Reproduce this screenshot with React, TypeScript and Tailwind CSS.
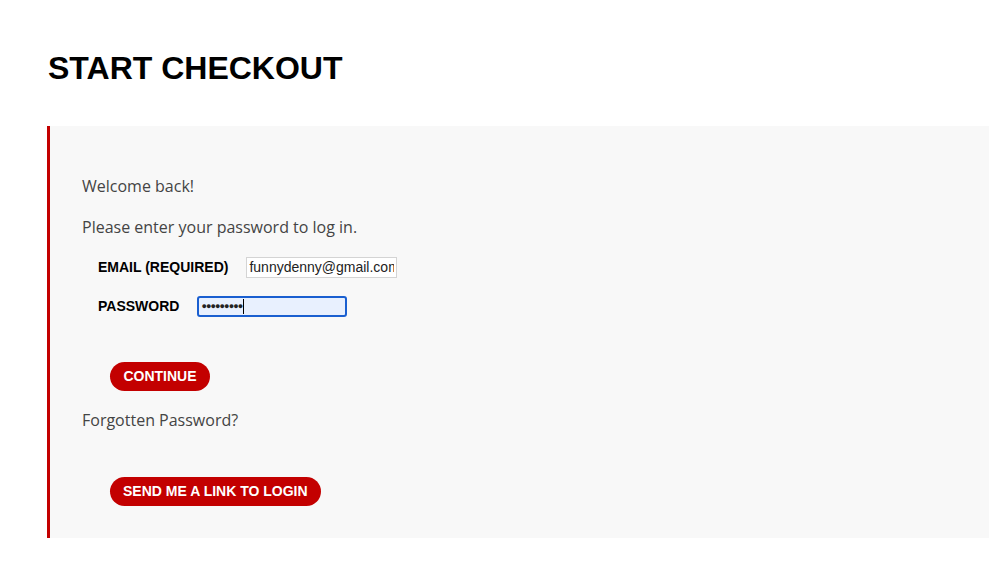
import React from 'react';

const sans = { fontFamily: '"Open Sans", sans-serif' };

const App: React.FC = () => {
  return (
    <div className="min-h-[579px] bg-white pl-[47px] pt-[50px]" style={{ fontFamily: '"Liberation Sans", Arial, sans-serif' }}>
      {/* Title */}
      <h1 className="text-[32px] leading-[36px] font-bold text-black ml-px">START CHECKOUT</h1>

      {/* Login panel */}
      <div className="mt-[40px] border-l-[3px] border-[#c30000] bg-[#f8f8f8] pl-[32px] pt-[48px] pb-[32px]">
        <p className="text-[16px] leading-6 text-[#444]" style={sans}>Welcome back!</p>
        <p className="mt-[17px] text-[16px] leading-6 text-[#444]" style={sans}>Please enter your password to log in.</p>

        <div className="mt-[18px] ml-[16px] flex flex-col gap-[18px]">
          <div className="flex items-center gap-[18px]">
            <label className="text-[14px] font-bold text-black">EMAIL (REQUIRED)</label>
            <input
              readOnly
              value="funnydenny@gmail.com"
              className="w-[151px] h-[21px] border border-[#d4d4d4] bg-white px-[2px] text-[14px] text-[#222] outline-none"
            />
          </div>
          <div className="flex items-center gap-[18px]">
            <label className="text-[14px] font-bold text-black">PASSWORD</label>
            <div className="w-[150px] h-[21px] rounded-[3px] border-2 border-[#1a5fd0] bg-[#e8f0fe] flex items-center px-[2px]">
              <span className="text-[9px] leading-none text-[#222] tracking-[-0.9px]">●●●●●●●●●</span>
              <span className="ml-[1px] w-px h-[15px] bg-black"></span>
            </div>
          </div>
        </div>

        <button className="mt-[45px] ml-[28px] h-[29px] w-[100px] rounded-full bg-[#c30000] text-white text-[14px] font-bold block">
          CONTINUE
        </button>

        <p className="mt-[17px] text-[16px] leading-6 text-[#444]" style={sans}>Forgotten Password?</p>

        <button className="mt-[45px] ml-[28px] h-[29px] px-[13px] rounded-full bg-[#c30000] text-white text-[14px] font-bold block">
          SEND ME A LINK TO LOGIN
        </button>
      </div>
    </div>
  );
};

export default App;
